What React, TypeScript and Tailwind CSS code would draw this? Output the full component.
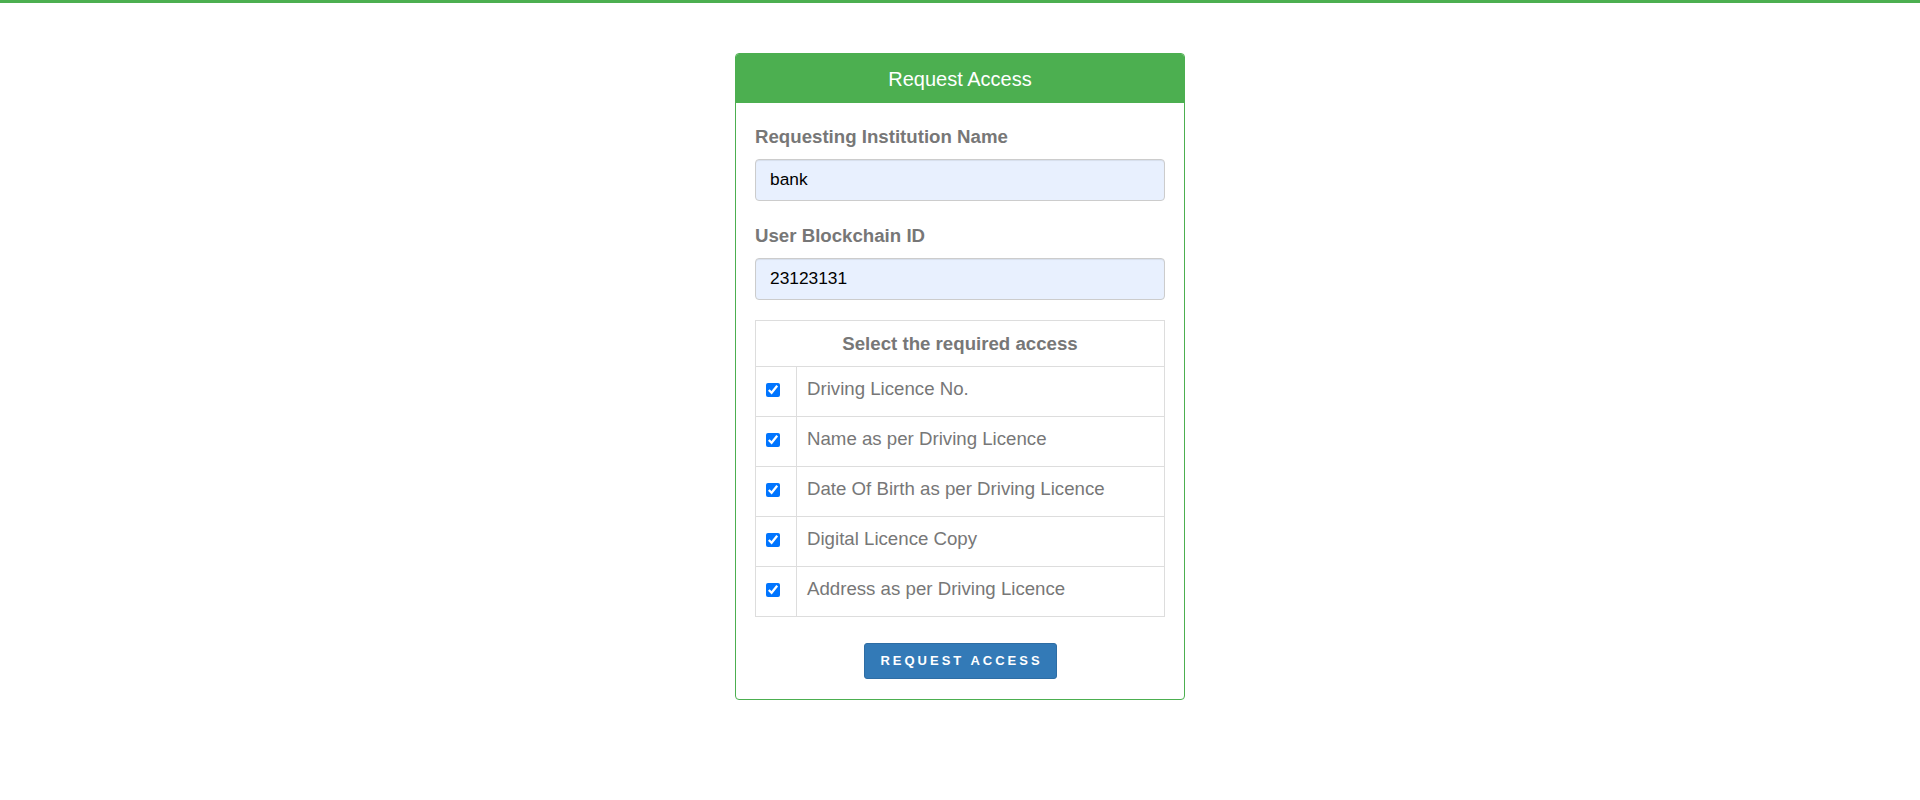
import React from "react";

const items = [
  "Driving Licence No.",
  "Name as per Driving Licence",
  "Date Of Birth as per Driving Licence",
  "Digital Licence Copy",
  "Address as per Driving Licence",
];

export default function App() {
  return (
    <div className="min-h-[800px] bg-white" style={{ fontFamily: '"Liberation Sans", Arial, sans-serif' }}>
      <div className="h-[3px] bg-[#4caf50]" />
      <div className="flex justify-center pt-[50px]">
        <div className="w-[450px] rounded-[4px] border border-[#4caf50] bg-white overflow-hidden">
          <div className="h-[49px] bg-[#4caf50] flex items-center justify-center text-white text-[20px]">
            Request Access
          </div>
          <div className="px-[19px] pt-[20px] pb-[20px]">
            <label className="block text-[18.67px] leading-[27px] font-bold text-[#777] mb-[9px]">
              Requesting Institution Name
            </label>
            <div className="h-[42px] rounded-[4px] border border-[#ccc] bg-[#e8f0fe] flex items-center px-[14px] text-[17.33px] text-black shadow-[inset_0_1px_1px_rgba(0,0,0,0.075)]">
              bank
            </div>
            <label className="block mt-[21px] text-[18.67px] leading-[27px] font-bold text-[#777] mb-[9px]">
              User Blockchain ID
            </label>
            <div className="h-[42px] rounded-[4px] border border-[#ccc] bg-[#e8f0fe] flex items-center px-[14px] text-[17.33px] text-black shadow-[inset_0_1px_1px_rgba(0,0,0,0.075)]">
              23123131
            </div>
            <div className="mt-[20px] border border-[#ddd]">
              <div className="h-[45px] flex items-center justify-center text-[18.67px] font-bold text-[#777]">
                Select the required access
              </div>
              {items.map((t) => (
                <div key={t} className="h-[50px] border-t border-[#ddd] flex">
                  <div className="w-[41px] border-r border-[#ddd] flex items-center pl-[10px] pb-[4px]">
                    <input type="checkbox" defaultChecked className="w-[14px] h-[14px] m-0 accent-[#0075ff]" />
                  </div>
                  <div className="flex-1 flex items-center pl-[10px] pb-[5px] text-[18.67px] text-[#777]">{t}</div>
                </div>
              ))}
            </div>
            <div className="mt-[26px] flex justify-center">
              <button className="h-[36px] w-[193px] rounded-[3px] border border-[#2e6da4] bg-[#337ab7] text-white text-[13px] font-bold tracking-[3px] pl-[3px]">
                REQUEST ACCESS
              </button>
            </div>
          </div>
        </div>
      </div>
    </div>
  );
}
